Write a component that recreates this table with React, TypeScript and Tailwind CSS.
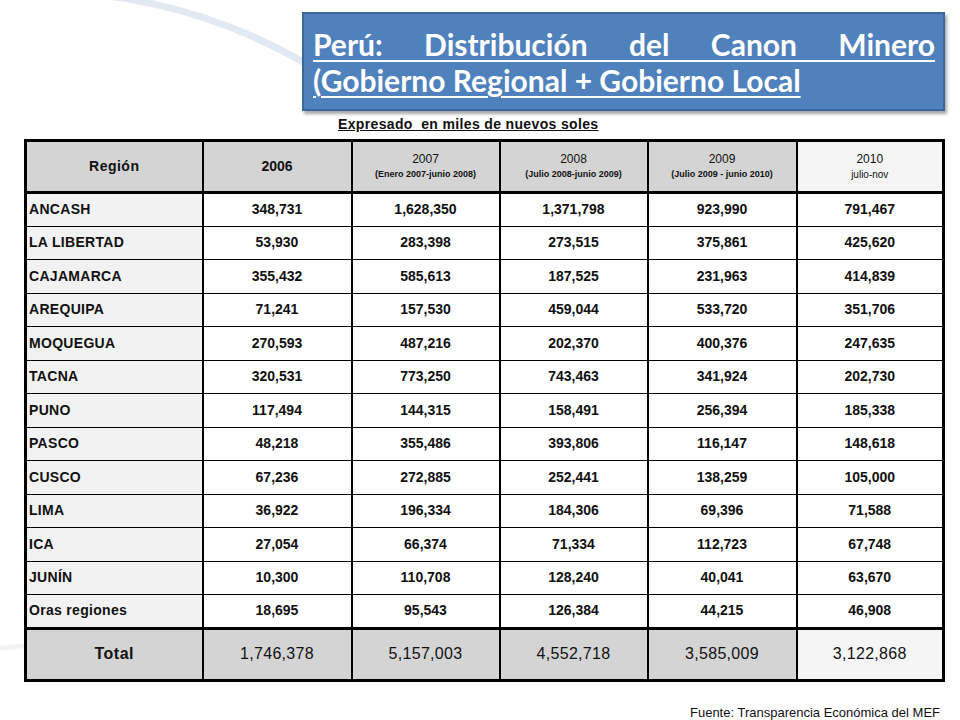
const rows: [string, string, string, string, string, string][] = [
  ["ANCASH", "348,731", "1,628,350", "1,371,798", "923,990", "791,467"],
  ["LA LIBERTAD", "53,930", "283,398", "273,515", "375,861", "425,620"],
  ["CAJAMARCA", "355,432", "585,613", "187,525", "231,963", "414,839"],
  ["AREQUIPA", "71,241", "157,530", "459,044", "533,720", "351,706"],
  ["MOQUEGUA", "270,593", "487,216", "202,370", "400,376", "247,635"],
  ["TACNA", "320,531", "773,250", "743,463", "341,924", "202,730"],
  ["PUNO", "117,494", "144,315", "158,491", "256,394", "185,338"],
  ["PASCO", "48,218", "355,486", "393,806", "116,147", "148,618"],
  ["CUSCO", "67,236", "272,885", "252,441", "138,259", "105,000"],
  ["LIMA", "36,922", "196,334", "184,306", "69,396", "71,588"],
  ["ICA", "27,054", "66,374", "71,334", "112,723", "67,748"],
  ["JUNÍN", "10,300", "110,708", "128,240", "40,041", "63,670"],
  ["Oras regiones", "18,695", "95,543", "126,384", "44,215", "46,908"],
];

const totals = ["1,746,378", "5,157,003", "4,552,718", "3,585,009", "3,122,868"];

const periods = [
  { year: "2007", sub: "(Enero 2007-junio 2008)" },
  { year: "2008", sub: "(Julio 2008-junio 2009)" },
  { year: "2009", sub: "(Julio 2009 - junio 2010)" },
];

export default function App() {
  return (
    <div className="relative w-[960px] h-[720px] overflow-hidden bg-white font-['Liberation_Sans',Arial,sans-serif] text-[#111]">
      {/* faint background swoosh */}
      <svg className="absolute inset-0 pointer-events-none" width="960" height="720" viewBox="0 0 960 720">
        <path d="M108,-4 Q215,10 310,66" fill="none" stroke="#e3e9f3" strokeWidth="7" strokeLinecap="round" />
        <path d="M0,648 Q120,640 260,592" fill="none" stroke="#f3f3f3" strokeWidth="5" strokeLinecap="round" />
      </svg>

      <div className="relative">
        <div className="ml-[302px] mt-[12px] w-[643px] h-[99px] bg-[#4f81bd] border-2 border-[#3b679c] shadow-[2px_3px_3px_rgba(0,0,0,0.35)] pl-[9px] pr-[8px] pt-[12px] font-['Lato','Open_Sans',sans-serif] font-bold text-white text-[30px] leading-[36px]">
          <div className="underline decoration-2 underline-offset-[4px] text-justify [text-align-last:justify]">
            Perú: Distribución del Canon Minero
          </div>
          <div className="underline decoration-2 underline-offset-[4px]">(Gobierno Regional + Gobierno Local</div>
        </div>

        <div className="ml-[338px] mt-[6px] text-[14px] leading-[14px] font-bold underline whitespace-pre tracking-[0.35px]">
          Expresado  en miles de nuevos soles
        </div>

        <table className="ml-[24px] mt-[8px] border-collapse border-[3px] border-black table-fixed w-[918px]">
          <colgroup>
            <col className="w-[177px]" />
            <col className="w-[149px]" />
            <col className="w-[148px]" />
            <col className="w-[148px]" />
            <col className="w-[149px]" />
            <col className="w-[147px]" />
          </colgroup>
          <thead>
            <tr className="h-[52px]">
              <th className="bg-[#d4d4d4] border-x-2 border-b-[3px] border-black text-[14px] font-bold tracking-[0.5px]">Región</th>
              <th className="bg-[#d4d4d4] border-x-2 border-b-[3px] border-black text-[14px] font-bold">2006</th>
              {periods.map((p) => (
                <th key={p.year} className="bg-[#d4d4d4] border-x-2 border-b-[3px] border-black font-normal leading-[15px]">
                  <div className="text-[12px]">{p.year}</div>
                  <div className="text-[9px] font-bold">{p.sub}</div>
                </th>
              ))}
              <th className="bg-[#f5f5f5] border-x-2 border-b-[3px] border-black font-normal leading-[15px]">
                <div className="text-[12px]">2010</div>
                <div className="text-[10px]">julio-nov</div>
              </th>
            </tr>
          </thead>
          <tbody>
            {rows.map((r) => (
              <tr key={r[0]} className="h-[33.5px]">
                <td className="bg-[#f2f2f2] border-x-2 border-y border-black pl-[2px] text-[14px] font-bold tracking-[0.3px]">{r[0]}</td>
                {r.slice(1).map((v, i) => (
                  <td key={i} className="bg-white border-x-2 border-y border-black text-center text-[14px] font-bold">
                    {v}
                  </td>
                ))}
              </tr>
            ))}
            <tr className="h-[52px]">
              <td className="bg-[#d4d4d4] border-x-2 border-t-[3px] border-black text-center text-[16px] font-bold tracking-[0.5px]">Total</td>
              {totals.map((v, i) => (
                <td
                  key={i}
                  className={`${i === 4 ? "bg-[#f5f5f5]" : "bg-[#d4d4d4]"} border-x-2 border-t-[3px] border-black text-center text-[16px] tracking-[0.3px]`}
                >
                  {v}
                </td>
              ))}
            </tr>
          </tbody>
        </table>

        <div className="flex justify-end pr-[20px] mt-[23px] text-[13px] leading-[16px]">
          Fuente: Transparencia Económica del MEF
        </div>
      </div>
    </div>
  );
}
